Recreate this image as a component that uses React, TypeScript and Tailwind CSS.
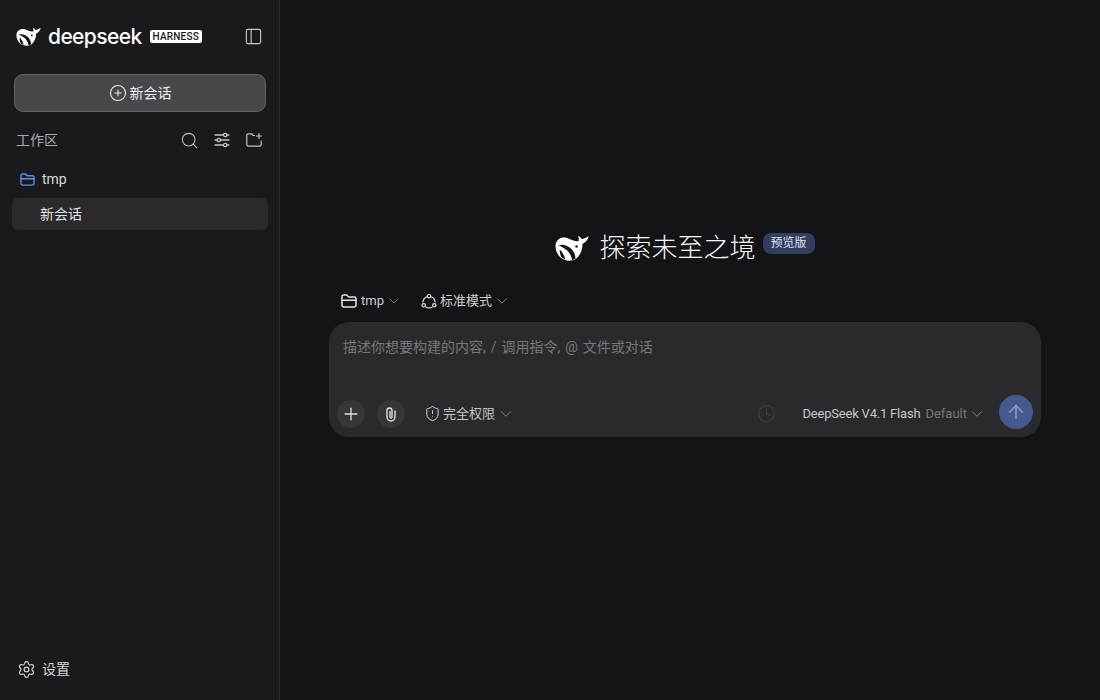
import { ChevronDown, Clock, Plus, ArrowUp, Search, PanelLeft, Settings, ShieldAlert, CirclePlus } from "lucide-react";

const base = "font-['Roboto','Noto_Sans_CJK_SC',sans-serif]";

const Whale = ({ className }: { className?: string }) => (
  <svg viewBox="0 0 34 26" className={className} fill="none">
    <path
      d="M.8 8.500C3 3 7.500 1.800 12 3c3.500 1 6.500 3 9.500 3.200.6 0 1.500 0 2.200-.3.300-1.600.1-3.200-.7-4.900 1.800.7 3 1.800 3.600 3 2.300-.3 4.900-1.200 7-3-.5 3.500-2.200 6-6.100 7.900C27.500 15 25 21 20 24.500 15.500 26.500 9 26 5 22 1.500 18.500-.2 13 .8 8.500Z"
      fill="#fff"
    />
    <path
      d="M3.500 10.300c4.500-1.500 9.500.2 13 3.800 2.800 2.900 4 6.500 4 9.500-1 .7-2.200 1.200-3.500 1.500-.4-3.700-2.300-7.300-5.400-10-2.300-2-5.400-3.400-8.100-4.800Z"
      fill="#141416"
    />
    <path d="M4.800 14.500c2 1.800 4.500 5.500 5.500 9.800-1.600-.3-3-1.200-4.100-2.500-1-2.200-1.600-4.700-1.400-7.300Z" fill="#141416" />
    <circle cx="21.500" cy="11.500" r="1.200" fill="#141416" />
  </svg>
);

const FolderIcon = ({ className }: { className?: string }) => (
  <svg viewBox="0 0 16 14" className={className} fill="none" stroke="currentColor" strokeWidth="1.5" strokeLinecap="round" strokeLinejoin="round">
    <path d="M1 4V2.700A1.700 1.700 0 0 1 2.700 1h2.500c.5 0 .9.200 1.200.6l.6.800c.3.400.7.600 1.200.6h5.100A1.700 1.700 0 0 1 15 4.700v6.600a1.700 1.700 0 0 1-1.700 1.700H2.700A1.700 1.700 0 0 1 1 11.300V4Z" />
    <path d="M1 6.200h14" />
  </svg>
);

const ModeIcon = () => (
  <svg viewBox="0 0 16 16" className="h-[16px] w-[16px]" fill="none" stroke="currentColor" strokeWidth="1.2" strokeLinecap="round">
    <circle cx="8" cy="3.200" r="1.700" />
    <circle cx="2.700" cy="12.300" r="1.700" />
    <circle cx="13.300" cy="12.300" r="1.700" />
    <path d="M5.800 3.700A6.500 6.500 0 0 0 1.900 9M10.200 3.700A6.500 6.500 0 0 1 14.100 9M5 14.200a7 7 0 0 0 6 0" />
  </svg>
);

const SlidersIcon = () => (
  <svg viewBox="0 0 18 18" className="h-[18px] w-[18px]" fill="none" stroke="currentColor" strokeWidth="1.3" strokeLinecap="round">
    <path d="M2 4h8.500M14 4h2M2 9h2M7.500 9H16M2 14h8.500M14 14h2" />
    <circle cx="12.200" cy="4" r="1.700" />
    <circle cx="5.800" cy="9" r="1.700" />
    <circle cx="12.200" cy="14" r="1.700" />
  </svg>
);

const NewFolderIcon = () => (
  <svg viewBox="0 0 18 18" className="h-[18px] w-[18px]" fill="none" stroke="currentColor" strokeWidth="1.2" strokeLinecap="round" strokeLinejoin="round">
    <path d="M9.500 4.500H8.200L6.700 2.800H3.500A1.700 1.700 0 0 0 1.800 4.500v9A1.700 1.700 0 0 0 3.500 15.200h11a1.700 1.700 0 0 0 1.700-1.700V10" />
    <path d="M14 2.500v5M11.500 5h5" />
  </svg>
);

const ClipIcon = () => (
  <svg viewBox="0 0 16 16" className="h-[16px] w-[16px]" fill="none" stroke="currentColor" strokeWidth="1.4" strokeLinecap="round">
    <path d="M12 5v6a4 4 0 0 1-8 0V4.500a2.500 2.500 0 0 1 5 0V11a1 1 0 0 1-2 0V5.500" />
  </svg>
);

export default function App() {
  return (
    <div className={`${base} flex h-[700px] w-[1100px] overflow-hidden bg-[#141416] text-[#e5e5e7]`}>
      <aside className="flex w-[280px] shrink-0 flex-col border-r border-[#2e2e31] bg-[#1a1a1c]">
        <div className="mt-[18px] flex h-[36px] items-center pr-[16px] pl-[16px]">
          <Whale className="h-[19px] w-[25px]" />
          <span className="ml-[7px] font-['Inter',sans-serif] text-[21px] leading-none font-medium tracking-[-0.6px] text-white">deepseek</span>
          <span className="ml-[8px] rounded-[2px] bg-white px-[3px] text-[10px] leading-[13px] font-medium tracking-[0.2px] text-[#1a1a1c]">HARNESS</span>
          <PanelLeft className="ml-auto h-[19px] w-[19px] text-[#c9c9cc]" strokeWidth={1.4} />
        </div>

        <button className="mt-[20px] mr-[13px] ml-[14px] flex h-[38px] items-center justify-center gap-[3px] rounded-[9px] border border-[#626367] bg-[#47484c] text-[14px] text-[#eeeeef]">
          <CirclePlus className="h-[18px] w-[18px]" strokeWidth={1.4} />
          新会话
        </button>

        <div className="mt-[16px] flex h-[24px] items-center pr-[16px] pl-[16px] text-[#c4c4c7]">
          <span className="text-[14px] text-[#a9a9ac]">工作区</span>
          <div className="ml-auto flex items-center gap-[14px]">
            <Search className="h-[19px] w-[19px]" strokeWidth={1.3} />
            <SlidersIcon />
            <NewFolderIcon />
          </div>
        </div>

        <div className="mt-[15px] flex h-[24px] items-center gap-[7px] pl-[20px] text-[14px] text-[#d8d8da]">
          <FolderIcon className="h-[13px] w-[15px] text-[#5b8fe8]" />
          tmp
        </div>

        <div className="mt-[7px] mr-[11px] ml-[12px] flex h-[32px] items-center rounded-[6px] bg-[#2a2a2c] pl-[28px] text-[14px] text-[#e2e2e4]">新会话</div>

        <div className="mt-auto mb-[20px] flex h-[22px] items-center gap-[6px] pl-[17px] text-[14px] text-[#d4d4d6]">
          <Settings className="h-[19px] w-[19px]" strokeWidth={1.5} />
          设置
        </div>
      </aside>

      <main className="flex-1 pt-[231px] pl-[49px]">
        <div className="w-[712px]">
          <div className="flex items-center justify-center">
            <Whale className="h-[26px] w-[34px]" />
            <h1 className="ml-[10px] text-[26px] leading-[34px] font-light text-[#f4f4f5]">探索未至之境</h1>
            <span className="mb-[9px] ml-[7px] rounded-[8px] bg-[#323e5e] px-[8px] text-[12px] leading-[21px] text-[#dfe3ee]">预览版</span>
          </div>

          <div className="mt-[24px] flex h-[24px] items-center pl-[12px] text-[#cfcfd1]">
            <FolderIcon className="h-[14px] w-[16px] text-[#e4e4e6]" />
            <span className="ml-[4px] text-[13px]">tmp</span>
            <ChevronDown className="ml-[2px] h-[16px] w-[16px] text-[#88888b]" strokeWidth={1.3} />
            <span className="ml-[19px] text-[#dcdcde]"><ModeIcon /></span>
            <span className="ml-[3px] text-[13px]">标准模式</span>
            <ChevronDown className="ml-[1px] h-[18px] w-[18px] text-[#88888b]" strokeWidth={1.3} />
          </div>

          <div className="mt-[9px] flex h-[115px] flex-col rounded-[20px] bg-[#2a2a2c] px-[8px]">
            <div className="mt-[14px] pl-[6px] text-[14px] leading-[22px] [word-spacing:1.5px] text-[#77777a]">描述你想要构建的内容, / 调用指令, @ 文件或对话</div>
            <div className="mt-auto mb-[8px] flex items-center">
              <span className="mt-[4px] flex h-[28px] w-[28px] items-center justify-center rounded-full bg-[#363638] text-[#e0e0e2]">
                <Plus className="h-[20px] w-[20px]" strokeWidth={1.6} />
              </span>
              <span className="mt-[4px] ml-[12px] flex h-[28px] w-[28px] items-center justify-center rounded-full bg-[#363638] text-[#e0e0e2]">
                <ClipIcon />
              </span>
              <ShieldAlert className="mt-[3px] ml-[19px] h-[17px] w-[17px] text-[#d4d4d6]" strokeWidth={1.4} />
              <span className="mt-[3px] ml-[2px] text-[13px] text-[#c6c6c9]">完全权限</span>
              <ChevronDown className="mt-[3px] ml-[2px] h-[18px] w-[18px] text-[#88888b]" strokeWidth={1.3} />
              <Clock className="mt-[3px] ml-auto h-[19px] w-[19px] text-[#3f3f42]" strokeWidth={1.3} />
              <span className="mt-[3px] ml-[26px] text-[13px] tracking-[-0.2px] text-[#c6c6c9]">DeepSeek V4.1 Flash</span>
              <span className="mt-[3px] ml-[5px] text-[13px] text-[#77777a]">Default</span>
              <ChevronDown className="mt-[3px] ml-[1px] h-[18px] w-[18px] text-[#88888b]" strokeWidth={1.3} />
              <span className="ml-[13px] flex h-[34px] w-[34px] items-center justify-center rounded-full bg-[#445a8e] text-[#8d99b5]">
                <ArrowUp className="h-[22px] w-[22px]" strokeWidth={1.8} />
              </span>
            </div>
          </div>
        </div>
      </main>
    </div>
  );
}
